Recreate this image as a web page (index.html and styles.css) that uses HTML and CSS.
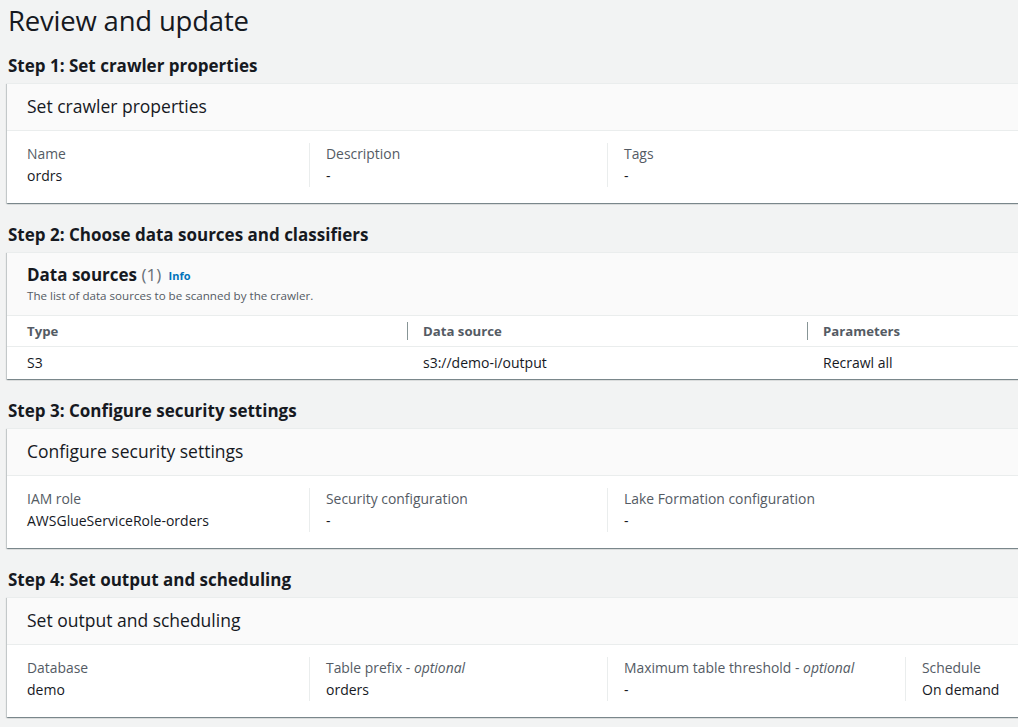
FILE: index.html
```html
<!DOCTYPE html>
<html lang="en">
<head>
<meta charset="utf-8">
<title>Review and update</title>
<link rel="stylesheet" href="styles.css">
</head>
<body>
<main class="page">
  <h1 class="page-title">Review and update</h1>

  <section class="step">
    <h2 class="step-title">Step 1: Set crawler properties</h2>
    <div class="card">
      <div class="card-header"><h3 class="card-title">Set crawler properties</h3></div>
      <div class="card-body">
        <div class="cols">
          <div class="col"><div class="label">Name</div><div class="value">ordrs</div></div>
          <div class="col"><div class="label">Description</div><div class="value">-</div></div>
          <div class="col"><div class="label">Tags</div><div class="value">-</div></div>
        </div>
      </div>
    </div>
  </section>

  <section class="step">
    <h2 class="step-title">Step 2: Choose data sources and classifiers</h2>
    <div class="card">
      <div class="card-header table-header">
        <h3 class="table-title">Data sources <span class="count">(1)</span> <a class="info">Info</a></h3>
        <p class="table-desc">The list of data sources to be scanned by the crawler.</p>
      </div>
      <table class="table">
        <colgroup><col class="w400"><col class="w400"><col class="w400"></colgroup>
        <thead>
          <tr><th>Type</th><th class="div">Data source</th><th class="div">Parameters</th></tr>
        </thead>
        <tbody>
          <tr><td>S3</td><td>s3://demo-i/output</td><td>Recrawl all</td></tr>
        </tbody>
      </table>
    </div>
  </section>

  <section class="step">
    <h2 class="step-title">Step 3: Configure security settings</h2>
    <div class="card">
      <div class="card-header"><h3 class="card-title">Configure security settings</h3></div>
      <div class="card-body">
        <div class="cols">
          <div class="col"><div class="label">IAM role</div><div class="value">AWSGlueServiceRole-orders</div></div>
          <div class="col"><div class="label">Security configuration</div><div class="value">-</div></div>
          <div class="col"><div class="label">Lake Formation configuration</div><div class="value">-</div></div>
        </div>
      </div>
    </div>
  </section>

  <section class="step">
    <h2 class="step-title">Step 4: Set output and scheduling</h2>
    <div class="card">
      <div class="card-header"><h3 class="card-title">Set output and scheduling</h3></div>
      <div class="card-body">
        <div class="cols">
          <div class="col"><div class="label">Database</div><div class="value">demo</div></div>
          <div class="col"><div class="label">Table prefix - <i>optional</i></div><div class="value">orders</div></div>
          <div class="col"><div class="label">Maximum table threshold - <i>optional</i></div><div class="value">-</div></div>
          <div class="col"><div class="label">Schedule</div><div class="value">On demand</div></div>
        </div>
      </div>
    </div>
  </section>
</main>
</body>
</html>
```

FILE: styles.css
```css
html, body {
  margin: 0;
  padding: 0;
  background: #f2f3f3;
  overflow: hidden;
}

body {
  font-family: "Open Sans", "Noto Sans", Arial, sans-serif;
  color: #16191f;
  font-size: 14px;
  line-height: 22px;
}

.page {
  width: 1220px;
  padding: 3px 0 0 7px;
}

.page-title {
  margin: 0 0 16px 1px;
  font-size: 27.5px;
  font-weight: 400;
  line-height: 36px;
  letter-spacing: -0.2px;
}

.step {
  margin-bottom: 21px;
}

.step-title {
  margin: 0 0 6px 1px;
  font-size: 17px;
  font-weight: 700;
  line-height: 22px;
}

.card {
  width: 1200px;
  background: #fff;
  border-top: 1px solid #eaeded;
  box-shadow: 0 1px 1px 0 rgba(0, 28, 36, 0.3), 1px 1px 1px 0 rgba(0, 28, 36, 0.15), -1px 1px 1px 0 rgba(0, 28, 36, 0.15);
}

.card-header {
  background: #fafafa;
  border-bottom: 1px solid #eaeded;
  padding: 11px 20px 13px 20px;
}

.card-title {
  margin: 0;
  font-size: 17.5px;
  font-weight: 400;
  line-height: 22px;
}

.card-body {
  padding: 12px 0 16px 4px;
}

.cols {
  display: grid;
  grid-template-columns: repeat(4, 298px);
}

.col {
  border-left: 1px solid #eaeded;
  padding-left: 16px;
}

.col:first-child {
  border-left-color: transparent;
  padding-left: 15px;
}

.label {
  color: #545b64;
  font-size: 13.9px;
}

.label i {
  font-style: italic;
}

.value {
  color: #16191f;
}

.table-header {
  padding: 11px 20px 11px 20px;
}

.table-title {
  margin: 0;
  font-size: 17px;
  font-weight: 700;
  line-height: 22px;
}

.count {
  font-weight: 400;
  color: #687078;
}

.info {
  font-size: 11px;
  font-weight: 700;
  color: #0073bb;
  margin-left: 3px;
  vertical-align: 1px;
}

.table-desc {
  margin: 1px 0 0 0;
  font-size: 11.6px;
  line-height: 16px;
  color: #545b64;
}

.table {
  border-collapse: collapse;
  table-layout: fixed;
  width: 1200px;
}

.w400 {
  width: 400px;
}

.table th {
  text-align: left;
  font-weight: 700;
  font-size: 13.2px;
  color: #545b64;
  height: 30px;
  padding: 0 0 0 16px;
  border-bottom: 1px solid #eaeded;
  position: relative;
}

.table th:first-child,
.table td:first-child {
  padding-left: 20px;
}

.table th.div::before {
  content: "";
  position: absolute;
  left: 0;
  top: 6px;
  bottom: 6px;
  border-left: 1px solid #879596;
}

.table td {
  height: 32px;
  padding: 0 0 0 16px;
  color: #16191f;
}
```
